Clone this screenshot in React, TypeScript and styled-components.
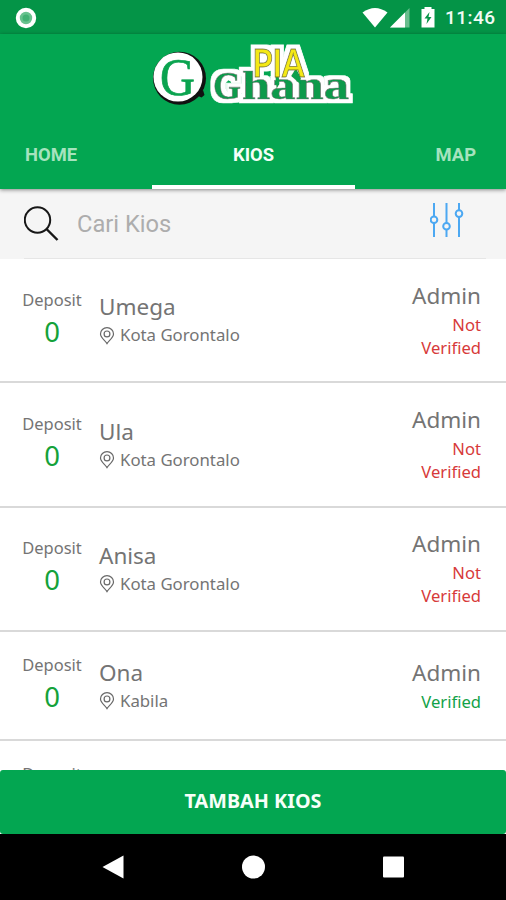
import React from "react";
import styled, { createGlobalStyle } from "styled-components";

const GlobalStyle = createGlobalStyle`
  * { box-sizing: border-box; }
  body { margin: 0; background: #fff; }
`;

const Screen = styled.div`
  display: flex;
  flex-direction: column;
  width: 506px;
  height: 900px;
  overflow: hidden;
  background: #fff;
  font-family: "Noto Sans", sans-serif;
  color: #747474;
`;

const StatusBar = styled.div`
  display: flex;
  align-items: center;
  flex: none;
  height: 34px;
  padding: 1px 11px 0 15px;
  background: #049447;
`;

const StatusIcons = styled.div`
  display: flex;
  align-items: center;
  margin-left: auto;
`;

const Clock = styled.span`
  width: 50px;
  margin-left: 9px;
  font: 500 19px/24px Roboto, sans-serif;
  letter-spacing: 0.45px;
  color: #f2fbf5;
  white-space: nowrap;
`;

const Header = styled.header`
  position: relative;
  z-index: 1;
  display: flex;
  flex-direction: column;
  flex: none;
  height: 155px;
  background: #03a651;
  box-shadow: 0 1px 4px rgba(0, 0, 0, 0.45);
`;

const LogoRow = styled.div`
  display: flex;
  justify-content: center;
  height: 86px;
  padding-top: 6px;
`;

const Tabs = styled.nav`
  display: grid;
  grid-template-columns: 152px 203px 151px;
  flex: 1;
`;

const Tab = styled.div<{ $active?: boolean; $align: string }>`
  display: flex;
  justify-content: ${(p) => p.$align};
  padding: ${(p) => (p.$active ? "23px 25px 0" : "23px 30px 0 25px")};
  border-bottom: 4px solid ${(p) => (p.$active ? "#fff" : "transparent")};
  font: 700 18.4px/24px Roboto, sans-serif;
  color: ${(p) => (p.$active ? "#f4fff8" : "#a6e3be")};
`;

const SearchBar = styled.div`
  display: flex;
  flex: none;
  height: 70px;
  padding: 0 20px 0 24px;
  background: #f5f5f5;
`;

const SearchInner = styled.div`
  display: flex;
  align-items: center;
  flex: 1;
  border-bottom: 1px solid #e6e6e6;
`;

const Placeholder = styled.span`
  margin-left: 18px;
  font: 400 23.7px/30px Roboto, sans-serif;
  color: #adadad;
`;

const FilterIcon = styled.svg`
  margin: 0 22px 8px auto;
`;

const List = styled.main`
  flex: 1;
  min-height: 0;
  overflow: hidden;
`;

const Row = styled.article<{ $compact?: boolean }>`
  display: flex;
  align-items: center;
  height: ${(p) => (p.$compact ? 109 : 124.4)}px;
  padding: 0 25px 0 22px;
  border-bottom: 2px solid #d9d9d9;
`;

const Deposit = styled.div`
  display: flex;
  flex-direction: column;
  align-items: center;
  width: 60px;
  padding-bottom: 3px;
`;

const Label = styled.span`
  font-size: 16.5px;
  line-height: 26px;
`;

const Amount = styled.span`
  font-size: 27.5px;
  line-height: 38px;
  color: #14a23a;
`;

const Place = styled.div`
  display: flex;
  flex-direction: column;
  margin-left: 17px;
  padding-bottom: 1px;
`;

const Name = styled.span`
  font-size: 22.5px;
  line-height: 32px;
`;

const Location = styled.span`
  display: flex;
  align-items: center;
  gap: 5px;
  font-size: 16.8px;
  line-height: 24.6px;
`;

const Owner = styled.div`
  display: flex;
  flex-direction: column;
  width: 80px;
  margin-left: auto;
  padding-bottom: 3px;
  text-align: right;
`;

const Role = styled.span`
  align-self: flex-end;
  font-size: 22.5px;
  line-height: 34px;
`;

const Status = styled.span<{ $ok?: boolean }>`
  align-self: flex-end;
  width: 62px;
  font-size: 16.6px;
  line-height: 23px;
  color: ${(p) => (p.$ok ? "#12a248" : "#d73a3a")};
`;

const AddButton = styled.button`
  flex: none;
  height: 64px;
  padding: 0 0 2px;
  border: 0;
  border-radius: 3px;
  background: #03a651;
  color: #f6fff9;
  font: 700 19.8px/26px "Noto Sans", sans-serif;
`;

const NavBar = styled.footer`
  display: grid;
  grid-template-columns: 140px 140px 140px;
  justify-content: center;
  justify-items: center;
  align-items: center;
  flex: none;
  height: 66px;
  background: #000;
`;

const Logo = () => (
  <svg width="206" height="74" viewBox="0 0 206 74">
    <defs>
      <filter id="white-outline" x="-10%" y="-20%" width="120%" height="140%">
        <feMorphology in="SourceAlpha" operator="dilate" radius="3.500" result="grown" />
        <feFlood floodColor="#fff" />
        <feComposite in2="grown" operator="in" result="outline" />
        <feMerge>
          <feMergeNode in="outline" />
          <feMergeNode in="SourceGraphic" />
        </feMerge>
      </filter>
    </defs>
    <circle cx="29.500" cy="38.200" r="26.500" fill="#111" />
    <path d="M46 55l7-5 1.500 5-3 2.500z" fill="#111" />
    <circle cx="28" cy="37" r="24.500" fill="#fff" />
    <text x="10" y="54.500" fontFamily="Liberation Serif, serif" fontSize="52" textLength="35" lengthAdjust="spacingAndGlyphs" fill="#0aa34f" stroke="#0aa34f" strokeWidth="0.700">G</text>
    <g filter="url(#white-outline)">
      <g fontFamily="Liberation Serif, serif" fontWeight="700" fontSize="39.500" fill="#079a4b" stroke="#66776c" strokeWidth="0.600">
        <text x="63" y="59" textLength="28" lengthAdjust="spacingAndGlyphs">G</text>
        <text x="92" y="59" textLength="107" lengthAdjust="spacingAndGlyphs">hana</text>
      </g>
      <path d="M125 33l3-5 1.500 16-3 5zM141 36l5-8 5 10-1 6z" fill="#07a04e" />
      <text x="102.500" y="37" textLength="52" lengthAdjust="spacingAndGlyphs" fontFamily="Lato, sans-serif" fontWeight="700" fontSize="37.500" fill="#f4e814" stroke="#7d7a22" strokeWidth="0.900">PIA</text>
    </g>
  </svg>
);

const Pin = () => (
  <svg width="16" height="18" viewBox="0 0 16 18" fill="none" stroke="#686868" strokeWidth="1.2">
    <path d="M8 16.6C6.200 13.600 1.500 10.800 1.500 7a6.500 6.300 0 0 1 13 0C14.500 10.800 9.800 13.600 8 16.600z" />
    <circle cx="8" cy="6.900" r="2.900" />
  </svg>
);

type Kiosk = { name: string; city: string; verified?: boolean };

const kiosks: Kiosk[] = [
  { name: "Umega", city: "Kota Gorontalo" },
  { name: "Ula", city: "Kota Gorontalo" },
  { name: "Anisa", city: "Kota Gorontalo" },
  { name: "Ona", city: "Kabila", verified: true },
];

const KioskRow = ({ name, city, verified }: Kiosk) => (
  <Row $compact={verified}>
    <Deposit>
      <Label>Deposit</Label>
      <Amount>0</Amount>
    </Deposit>
    <Place>
      <Name>{name}</Name>
      <Location><Pin />{city}</Location>
    </Place>
    <Owner>
      <Role>Admin</Role>
      <Status $ok={verified}>{verified ? "Verified" : "Not Verified"}</Status>
    </Owner>
  </Row>
);

export default function App() {
  return (
    <Screen>
      <GlobalStyle />
      <StatusBar>
        <svg width="22" height="22" viewBox="0 0 22 22">
          <circle cx="11" cy="11" r="8.200" fill="#68c28f" stroke="#fff" strokeWidth="4" />
          <circle cx="11" cy="11" r="3.500" fill="#43b174" />
        </svg>
        <StatusIcons>
          <svg width="76" height="24" viewBox="0 0 76 24" fill="#fff">
            <g transform="translate(2 -1)">
              <path d="M0.500 7.500Q13 -1.500 25.500 7.500L13 22.500z" />
              <path d="M28 22.500L47.500 3V22.500z" fill="#69be8e" />
              <path d="M28 22.500L43 7.500V22.500z" />
              <path d="M59.500 4h3V2h7v2h3v18.500h-13z" />
              <path d="M67.500 7l-5 6.500h3l-1 5.500 5-7h-3z" fill="#079448" />
            </g>
          </svg>
          <Clock>11:46</Clock>
        </StatusIcons>
      </StatusBar>
      <Header>
        <LogoRow><Logo /></LogoRow>
        <Tabs>
          <Tab $align="flex-start">HOME</Tab>
          <Tab $align="center" $active>KIOS</Tab>
          <Tab $align="flex-end">MAP</Tab>
        </Tabs>
      </Header>
      <SearchBar>
        <SearchInner>
          <svg width="35" height="36" viewBox="0 0 35 36" fill="none" stroke="#171717" strokeWidth="2">
            <circle cx="13.500" cy="14" r="12.700" />
            <path d="M22.500 23L33.500 34" strokeWidth="2.400" />
          </svg>
          <Placeholder>Cari Kios</Placeholder>
          <FilterIcon width="34" height="34" viewBox="0 0 34 34" fill="none" stroke="#4ca8f2" strokeWidth="2">
            <path d="M4 0V13.500M4 20V34M16.500 0V20M16.500 26.500V34M29 0V7.500M29 14V34" />
            <circle cx="4" cy="16.800" r="3.300" />
            <circle cx="16.500" cy="23.300" r="3.300" />
            <circle cx="29" cy="10.600" r="3.300" />
          </FilterIcon>
        </SearchInner>
      </SearchBar>
      <List>
        {kiosks.map((k) => <KioskRow key={k.name} {...k} />)}
        <Row $compact>
          <Deposit>
            <Label>Deposit</Label>
            <Amount>0</Amount>
          </Deposit>
        </Row>
      </List>
      <AddButton>TAMBAH KIOS</AddButton>
      <NavBar>
        <svg width="22" height="24" viewBox="0 0 22 24"><path d="M21.500 0.500V23.500L0.500 12z" fill="#fff" /></svg>
        <svg width="24" height="24" viewBox="0 0 24 24"><circle cx="12.500" cy="12" r="11.500" fill="#fff" /></svg>
        <svg width="22" height="22" viewBox="0 0 22 22"><rect x="1" y="0.500" width="21" height="21" rx="1" fill="#fff" /></svg>
      </NavBar>
    </Screen>
  );
}
